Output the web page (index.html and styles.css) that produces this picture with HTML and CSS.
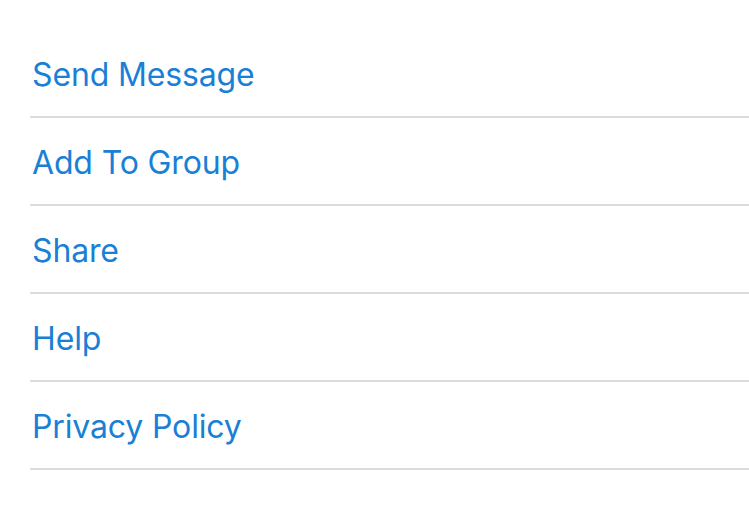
FILE: index.html
```html
<!DOCTYPE html>
<html>
<head>
<meta charset="utf-8">
<link rel="stylesheet" href="styles.css">
</head>
<body>
<ul class="menu">
  <li class="item">Send Message</li>
  <li class="item">Add To Group</li>
  <li class="item">Share</li>
  <li class="item">Help</li>
  <li class="item">Privacy Policy</li>
</ul>
</body>
</html>
```
FILE: styles.css
```css
html, body {
  margin: 0;
  padding: 0;
  background: #ffffff;
}
body {
  width: 749px;
  height: 506px;
  overflow: hidden;
  font-family: Inter, "Liberation Sans", Arial, sans-serif;
}
.menu {
  list-style: none;
  margin: 0;
  padding: 30px 0 0 30px;
}
.item {
  height: 84px;
  padding: 2px 0 0 2px;
  border-bottom: 2px solid #dcdcdc;
  display: flex;
  align-items: center;
  font-size: 32px;
  letter-spacing: -0.15px;
  color: #1a7fd6;
  box-sizing: content-box;
}
```
